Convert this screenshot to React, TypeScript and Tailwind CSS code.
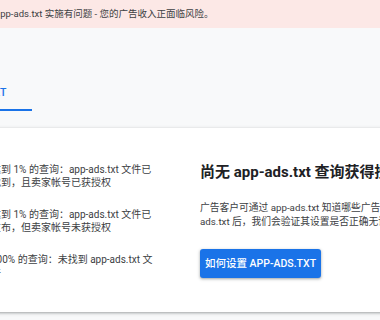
const font = { fontFamily: 'Roboto, "Noto Sans CJK SC", sans-serif' };

const legend = [
  ['达到 1% 的查询：app-ads.txt 文件已', '找到，且卖家帐号已获授权'],
  ['达到 1% 的查询：app-ads.txt 文件已', '发布，但卖家帐号未获授权'],
  ['100% 的查询：未找到 app-ads.txt 文', '件'],
];

export default function App() {
  return (
    <div className="relative w-[380px] h-[320px] overflow-hidden bg-[#f8f9fa] text-[#3c4043]" style={font}>
      {/* 警告横幅 */}
      <div className="h-[28px] bg-[#fce8e6] flex items-center">
        <span className="ml-[-5px] whitespace-nowrap text-[9.5px] text-[#3c4043]">
          app-ads.txt 实施有问题 - 您的广告收入正面临风险。
        </span>
      </div>

      {/* 标签 */}
      <div className="pt-[57px] pb-[17px]">
        <div className="ml-[-60px] w-[92px] flex flex-col">
          <div className="h-[16px] leading-[16px] text-right pr-[26.5px] text-[10.5px] font-medium text-[#1a73e8] whitespace-nowrap">
            APP-ADS.TXT
          </div>
          <div className="mt-[8px] h-[2px] bg-[#1a73e8]" />
        </div>
      </div>

      {/* 卡片 */}
      <div className="mx-[-16px] h-[184px] bg-white flex shadow-[0_1px_2px_rgba(60,64,67,0.3),0_1px_3px_1px_rgba(60,64,67,0.15)]">
        <div className="w-[216px] shrink-0 pl-[7px] pt-[35px] flex flex-col gap-[19px]">
          {legend.map((g, i) => (
            <div key={i} className="text-[10px] leading-[13px] whitespace-nowrap">
              <div>{g[0]}</div>
              <div>{g[1]}</div>
            </div>
          ))}
        </div>
        <div className="pt-[33px] whitespace-nowrap">
          <h2 className="text-[15px] leading-[22px] font-bold text-[#202124]">尚无 app-ads.txt 查询获得授权</h2>
          <div className="mt-[18px] text-[9.75px] leading-[14px]">
            <div>广告客户可通过 app-ads.txt 知道哪些广告来源获得授权。发布 app-</div>
            <div>ads.txt 后，我们会验证其设置是否正确无误。</div>
          </div>
          <button
            type="button"
            className="mt-[20px] w-[121px] h-[29px] flex items-center justify-center rounded-[3px] bg-[#1a73e8] text-white text-[10.5px] font-medium shadow-[0_1px_2px_rgba(60,64,67,0.3),0_1px_3px_1px_rgba(60,64,67,0.15)]"
          >
            如何设置 APP-ADS.TXT
          </button>
        </div>
      </div>
    </div>
  );
}
